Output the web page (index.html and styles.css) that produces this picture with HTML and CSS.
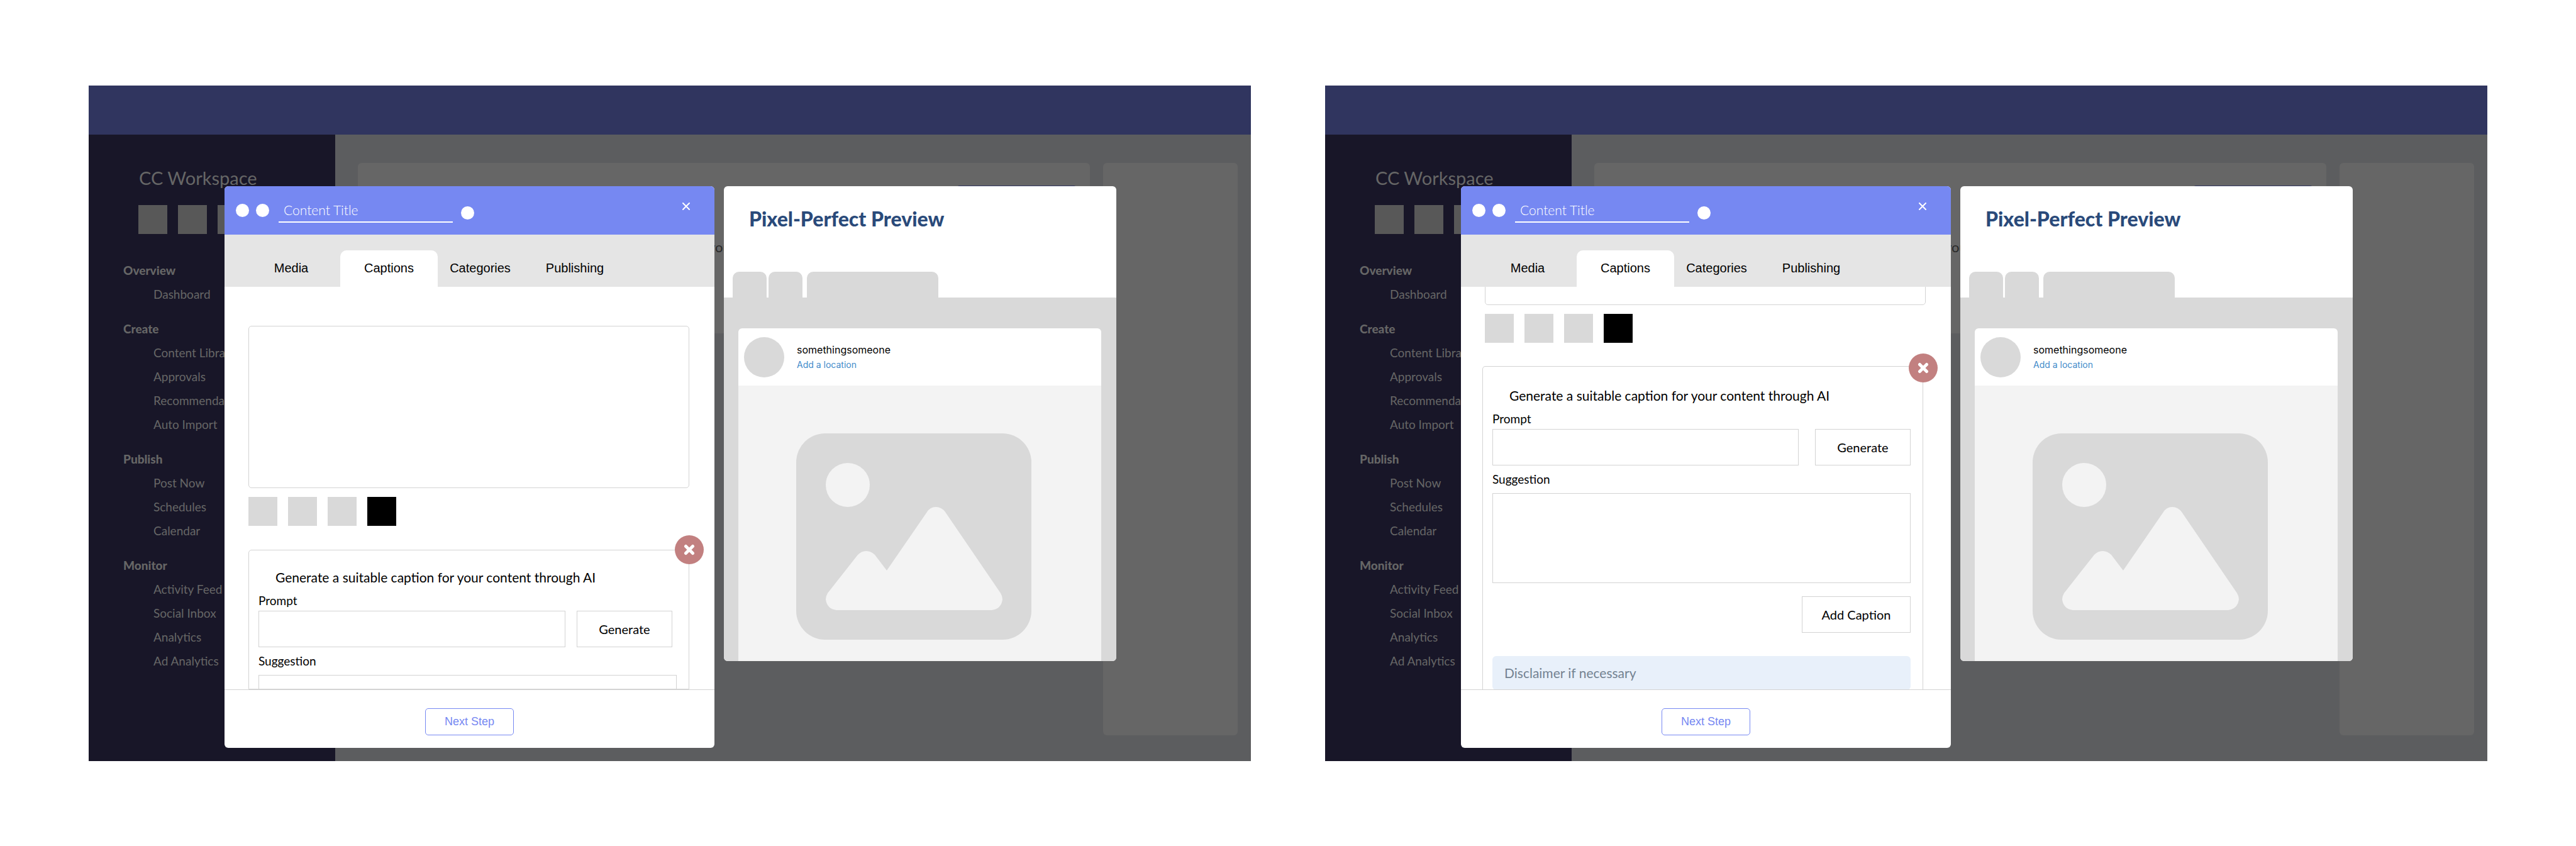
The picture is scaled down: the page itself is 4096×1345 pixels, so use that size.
FILE: index.html
```html
<!DOCTYPE html>
<html lang="en">
<head>
<meta charset="utf-8">
<title>CC Workspace</title>
<link rel="stylesheet" href="styles.css">
</head>
<body>
<main class="board">

  <section class="screen">
    <header class="topbar"></header>
    <div class="workspace">
      <nav class="sidebar">
        <h1 class="brand">CC Workspace</h1>
        <div class="accounts"><span class="square"></span><span class="square"></span><span class="square"></span></div>
        <h2 class="nav-title">Overview</h2>
        <ul class="nav-list"><li><a href="#">Dashboard</a></li></ul>
        <h2 class="nav-title">Create</h2>
        <ul class="nav-list"><li><a href="#">Content Library</a></li><li><a href="#">Approvals</a></li><li><a href="#">Recommendations</a></li><li><a href="#">Auto Import</a></li></ul>
        <h2 class="nav-title">Publish</h2>
        <ul class="nav-list"><li><a href="#">Post Now</a></li><li><a href="#">Schedules</a></li><li><a href="#">Calendar</a></li></ul>
        <h2 class="nav-title">Monitor</h2>
        <ul class="nav-list"><li><a href="#">Activity Feed</a></li><li><a href="#">Social Inbox</a></li><li><a href="#">Analytics</a></li><li><a href="#">Ad Analytics</a></li></ul>
      </nav>
      <div class="content">
        <div class="panel"><div class="panel-action"></div><p class="panel-text">your</p></div>
        <aside class="side-panel"></aside>
      </div>
    </div>

    <div class="overlay">
      <section class="composer">
        <header class="composer-head">
          <span class="dot"></span><span class="dot"></span>
          <input class="title-input" type="text" value="Content Title" aria-label="Content title">
          <span class="dot dot-low"></span>
          <button class="close" type="button" aria-label="Close"><svg viewBox="0 0 12 12" width="12" height="12"><path d="M1 1l10 10M11 1L1 11" stroke="#fff" stroke-width="2" stroke-linecap="round"/></svg></button>
        </header>
        <nav class="tabs">
          <button class="tab tab-media" type="button">Media</button>
          <button class="tab tab-captions" type="button">Captions</button>
          <button class="tab tab-categories" type="button">Categories</button>
          <button class="tab tab-publishing" type="button">Publishing</button>
        </nav>
        <div class="composer-body">
          <textarea class="caption" aria-label="Caption"></textarea>
          <div class="swatches"><span class="swatch"></span><span class="swatch"></span><span class="swatch"></span><span class="swatch swatch-dark"></span></div>
          <div class="ai">
            <form class="ai-card">
              <h3 class="ai-title">Generate a suitable caption for your content through AI</h3>
              <label class="label" for="prompt-a">Prompt</label>
              <div class="prompt-row"><input class="field" id="prompt-a" type="text"><button class="box-button generate" type="button">Generate</button></div>
              <label class="label label-suggestion" for="suggestion-a">Suggestion</label>
              <textarea class="field suggestion" id="suggestion-a"></textarea>
            </form>
            <button class="dismiss" type="button" aria-label="Dismiss"><svg viewBox="0 0 18 18" width="18" height="18"><path d="M3.500 3.500l11 11M14.500 3.500L3.500 14.500" stroke="#fff" stroke-width="5" stroke-linecap="round"/></svg></button>
          </div>
        </div>
        <footer class="composer-foot"><button class="next" type="button">Next Step</button></footer>
      </section>

      <section class="preview">
        <h2 class="preview-title">Pixel-Perfect Preview</h2>
        <div class="preview-tabs"><span class="ptab"></span><span class="ptab"></span><span class="ptab ptab-wide"></span></div>
        <div class="canvas">
          <article class="post">
            <header class="post-head">
              <span class="avatar"></span>
              <div><p class="user">somethingsomeone</p><a class="location" href="#">Add a location</a></div>
            </header>
            <div class="post-image">
              <svg class="picture" viewBox="0 0 374 328" width="374" height="328"><rect width="374" height="328" rx="46" fill="#d9d9d9"/><circle cx="82" cy="82" r="35" fill="#f3f3f3"/><path d="M208 125Q213 117 222 117Q231 117 237 125L325 254Q328 259 328 264Q326 279 311 281H64Q49 279 47 264Q47 259 50 254L98 193Q104 187 111 187Q119 187 125 193L144 218Z" fill="#f3f3f3"/></svg>
            </div>
          </article>
        </div>
      </section>
    </div>
  </section>

  <section class="screen">
    <header class="topbar"></header>
    <div class="workspace">
      <nav class="sidebar">
        <h1 class="brand">CC Workspace</h1>
        <div class="accounts"><span class="square"></span><span class="square"></span><span class="square"></span></div>
        <h2 class="nav-title">Overview</h2>
        <ul class="nav-list"><li><a href="#">Dashboard</a></li></ul>
        <h2 class="nav-title">Create</h2>
        <ul class="nav-list"><li><a href="#">Content Library</a></li><li><a href="#">Approvals</a></li><li><a href="#">Recommendations</a></li><li><a href="#">Auto Import</a></li></ul>
        <h2 class="nav-title">Publish</h2>
        <ul class="nav-list"><li><a href="#">Post Now</a></li><li><a href="#">Schedules</a></li><li><a href="#">Calendar</a></li></ul>
        <h2 class="nav-title">Monitor</h2>
        <ul class="nav-list"><li><a href="#">Activity Feed</a></li><li><a href="#">Social Inbox</a></li><li><a href="#">Analytics</a></li><li><a href="#">Ad Analytics</a></li></ul>
      </nav>
      <div class="content">
        <div class="panel"><div class="panel-action"></div><p class="panel-text">your</p></div>
        <aside class="side-panel"></aside>
      </div>
    </div>

    <div class="overlay">
      <section class="composer composer-scrolled">
        <header class="composer-head">
          <span class="dot"></span><span class="dot"></span>
          <input class="title-input" type="text" value="Content Title" aria-label="Content title">
          <span class="dot dot-low"></span>
          <button class="close" type="button" aria-label="Close"><svg viewBox="0 0 12 12" width="12" height="12"><path d="M1 1l10 10M11 1L1 11" stroke="#fff" stroke-width="2" stroke-linecap="round"/></svg></button>
        </header>
        <nav class="tabs">
          <button class="tab tab-media" type="button">Media</button>
          <button class="tab tab-captions" type="button">Captions</button>
          <button class="tab tab-categories" type="button">Categories</button>
          <button class="tab tab-publishing" type="button">Publishing</button>
        </nav>
        <div class="composer-body">
          <textarea class="caption" aria-label="Caption"></textarea>
          <div class="swatches"><span class="swatch"></span><span class="swatch"></span><span class="swatch"></span><span class="swatch swatch-dark"></span></div>
          <div class="ai">
            <form class="ai-card">
              <h3 class="ai-title">Generate a suitable caption for your content through AI</h3>
              <label class="label" for="prompt-b">Prompt</label>
              <div class="prompt-row"><input class="field" id="prompt-b" type="text"><button class="box-button generate" type="button">Generate</button></div>
              <label class="label label-suggestion" for="suggestion-b">Suggestion</label>
              <textarea class="field suggestion" id="suggestion-b"></textarea>
              <button class="box-button add-caption" type="button">Add Caption</button>
              <p class="disclaimer">Disclaimer if necessary</p>
            </form>
            <button class="dismiss" type="button" aria-label="Dismiss"><svg viewBox="0 0 18 18" width="18" height="18"><path d="M3.500 3.500l11 11M14.500 3.500L3.500 14.500" stroke="#fff" stroke-width="5" stroke-linecap="round"/></svg></button>
          </div>
        </div>
        <footer class="composer-foot"><button class="next" type="button">Next Step</button></footer>
      </section>

      <section class="preview">
        <h2 class="preview-title">Pixel-Perfect Preview</h2>
        <div class="preview-tabs"><span class="ptab"></span><span class="ptab"></span><span class="ptab ptab-wide"></span></div>
        <div class="canvas">
          <article class="post">
            <header class="post-head">
              <span class="avatar"></span>
              <div><p class="user">somethingsomeone</p><a class="location" href="#">Add a location</a></div>
            </header>
            <div class="post-image">
              <svg class="picture" viewBox="0 0 374 328" width="374" height="328"><rect width="374" height="328" rx="46" fill="#d9d9d9"/><circle cx="82" cy="82" r="35" fill="#f3f3f3"/><path d="M208 125Q213 117 222 117Q231 117 237 125L325 254Q328 259 328 264Q326 279 311 281H64Q49 279 47 264Q47 259 50 254L98 193Q104 187 111 187Q119 187 125 193L144 218Z" fill="#f3f3f3"/></svg>
            </div>
          </article>
        </div>
      </section>
    </div>
  </section>

</main>
</body>
</html>
```
FILE: styles.css
```css
* { box-sizing: border-box; margin: 0; padding: 0; }

body { background: #fff; font-family: Lato, "Open Sans", sans-serif; color: #000; }
button, input, textarea { font: inherit; color: inherit; border: 0; background: none; border-radius: 0; }
button { cursor: pointer; }
textarea { resize: none; display: block; }
a { color: inherit; text-decoration: none; }
ul { list-style: none; }
svg { display: block; }

.board { display: flex; gap: 118px; padding: 136px 141px 135px; }

/* Dimmed application; the overlay shares its grid cells */
.screen { flex: 1; display: grid; grid-template-rows: 78px 1fr; }
.topbar { grid-area: 1 / 1; background: #30355f; }
.workspace { grid-area: 2 / 1; display: flex; }
.overlay { grid-area: 1 / 1 / 3 / 2; z-index: 1; }
.sidebar { width: 392px; background: #181628; color: #666; padding: 51px 0 0 55px; font-size: 19px; overflow: hidden; }
.brand { font-size: 29px; line-height: 36px; font-weight: 400; padding-left: 25px; }
.accounts { display: flex; gap: 17px; padding: 25px 0 38px 24px; }
.square { width: 46px; height: 46px; background: #585858; }
.nav-title { font-size: 19px; line-height: 39px; font-weight: 900; }
.nav-list { padding-left: 48px; line-height: 38px; margin-bottom: 16px; }
.content { flex: 1; display: flex; gap: 21px; padding: 45px 21px 41px 36px; background: #5c5d5f; }
.panel { flex: 1; height: 271px; background: #666; border-radius: 6px; padding: 36px 22px 0; }
.panel-action { width: 189px; height: 60px; margin-left: auto; background: #30355f; border-radius: 4px; }
.panel-text { font-size: 22px; line-height: 28px; padding: 24px 0 0 535px; color: #292929; }
.side-panel { width: 214px; background: #666; border-radius: 6px; }

/* Dialog and preview */
.overlay { display: grid; grid-template-columns: 779fr 624fr; gap: 15px; align-items: start; padding: 160px 214px 21px 216px; }
.composer { background: #fff; border-radius: 6px; overflow: hidden; }
.composer-head { height: 77px; background: #7688f2; display: flex; align-items: center; padding: 0 33px 0 18px; }
.dot { width: 21px; height: 21px; border-radius: 50%; background: #fff; }
.dot + .dot { margin-left: 11px; }
.title-input { width: 277px; height: 39px; margin: 0 13px 0 15px; padding: 0 8px 1px; border-bottom: 2px solid #fff; color: #fff; font-size: 21px; font-weight: 300; }
.dot-low { margin-top: 8px; }
.close { margin: 20px 0 0 auto; align-self: flex-start; width: 24px; height: 24px; display: grid; place-items: center; }

.tabs { height: 83px; background: #e5e5e5; display: flex; align-items: flex-end; padding-left: 28px; font-family: "Liberation Sans", Arial, sans-serif; font-size: 20px; }
.tab { height: 58px; padding-bottom: 2px; text-align: center; }
.tab-media { width: 156px; }
.tab-captions { width: 155px; background: #fff; border-radius: 10px 10px 0 0; }
.tab-categories { width: 135px; }
.tab-publishing { width: 166px; }

.composer-body { height: 640px; overflow: hidden; display: flex; flex-direction: column; padding: 62px 40px 0 38px; }
.caption { flex: none; height: 258px; border: 1px solid #d3d3d3; border-radius: 5px; }
.swatches { display: flex; gap: 17px; margin: 14px 0 38px; }
.swatch { width: 46px; height: 46px; background: #d9d9d9; }
.swatch-dark { background: #000; }
.ai { position: relative; flex: 1; min-height: 0; }
.ai-card { height: 100%; overflow: hidden; border: 1px solid #d3d3d3; border-radius: 5px 5px 0 0; padding: 28px 19px 0 15px; display: flex; flex-direction: column; }
.ai-title { font-size: 21px; line-height: 30px; font-weight: 400; padding-left: 27px; margin-bottom: 10px; }
.label { font-size: 19px; line-height: 24px; margin-bottom: 4px; }
.label-suggestion { margin: 10px 0; }
.prompt-row { display: flex; gap: 18px; padding-right: 7px; }
.field { border: 1px solid #d3d3d3; flex: 1; min-width: 0; height: 58px; padding: 0 12px; }
.box-button { border: 1px solid #d3d3d3; height: 58px; font-size: 20px; }
.generate { width: 152px; }
.suggestion { flex: none; height: 143px; padding: 12px; }
.add-caption { flex: none; width: 173px; margin: 21px 0 37px; align-self: flex-end; }
.disclaimer { flex: none; background: #e8f0fa; border-radius: 6px; color: #738291; font-size: 21px; line-height: 54px; padding-left: 19px; }
.dismiss { position: absolute; top: -23px; right: -23px; width: 46px; height: 46px; border-radius: 50%; background: #c28080; display: grid; place-items: center; }

/* The same dialog, scrolled down to the suggestion */
.composer-scrolled .caption { margin-top: -291px; }
.composer-scrolled .swatches { margin-bottom: 37px; }
.composer-scrolled .ai { margin: 0 4px 0 -4px; }
.composer-scrolled .ai-card { padding-top: 31px; border-bottom: 0; }
.composer-scrolled .prompt-row { gap: 26px; padding-right: 0; }
.composer-scrolled .dismiss { top: -20px; }

.composer-foot { height: 93px; border-top: 1px solid #d3d3d3; display: flex; justify-content: center; align-items: flex-start; padding-top: 29px; }
.next { width: 141px; height: 43px; border: 1px solid #7688f2; border-radius: 5px; color: #7688f2; font-family: "Liberation Sans", Arial, sans-serif; font-size: 18px; }

.preview { background: #fff; border-radius: 6px; overflow: hidden; }
.preview-title { font-size: 32px; line-height: 40px; font-weight: 900; color: #2a4a7a; padding: 32px 40px 64px; }
.preview-tabs { display: flex; padding-left: 14px; gap: 3px; }
.ptab { width: 54px; height: 41px; background: #d9d9d9; border-radius: 10px 10px 0 0; }
.ptab-wide { width: 209px; margin-left: 4px; }
.canvas { background: #d9d9d9; padding: 49px 24px 0 23px; }
.post { background: #fff; border-radius: 6px 6px 0 0; overflow: hidden; }
.post-head { height: 91px; display: flex; align-items: center; gap: 20px; padding-left: 9px; font-family: Inter, "Open Sans", sans-serif; }
.avatar { width: 64px; height: 64px; border-radius: 50%; background: #d9d9d9; }
.user { font-size: 16px; line-height: 24px; }
.location { display: block; font-size: 14px; line-height: 24px; color: #428bca; }
.post-image { background: #f3f3f3; padding: 76px 0 34px 92px; }
```
